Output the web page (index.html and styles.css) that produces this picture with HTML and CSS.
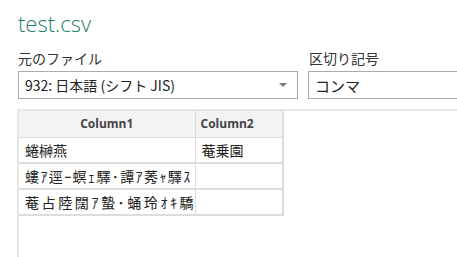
FILE: index.html
```html
<!DOCTYPE html>
<html lang="ja">

<head>
    <meta charset="UTF-8">
    <title>test.csv</title>
    <link rel="stylesheet" href="styles.css">
</head>

<body>
    <div class="import-dialog">
        <h1 class="file-title">test.csv</h1>

        <div class="options">
            <div class="field field-origin">
                <label>元のファイル</label>
                <div class="select-box">
                    <span>932: 日本語 (シフト JIS)</span>
                    <span class="arrow"></span>
                </div>
            </div>
            <div class="field field-delimiter">
                <label>区切り記号</label>
                <div class="select-box">
                    <span>コンマ</span>
                </div>
            </div>
        </div>

        <div class="preview">
            <table class="preview-table">
                <thead>
                    <tr>
                        <th class="col1">Column1</th>
                        <th class="col2">Column2</th>
                    </tr>
                </thead>
                <tbody>
                    <tr>
                        <td>蜷榊燕</td>
                        <td>菴乗園</td>
                    </tr>
                    <tr class="broken">
                        <td>螻ｱ逕ｰ螟ｪ驛･譚ｱ莠ｬ驛ｽ</td>
                        <td></td>
                    </tr>
                    <tr class="broken wide">
                        <td>菴占陸闊ｱ蟄･蛹玲ｵｷ驕</td>
                        <td></td>
                    </tr>
                </tbody>
            </table>
        </div>
    </div>
</body>

</html>
```

FILE: styles.css
```css
* {
    margin: 0;
    padding: 0;
    box-sizing: border-box;
}

body {
    background: #fff;
    font-family: 'Open Sans', 'Noto Sans CJK JP', sans-serif;
    color: #333;
    overflow: hidden;
    width: 457px;
    height: 257px;
}

.import-dialog {
    padding: 8px 0 0 17px;
}

.file-title {
    font-family: 'Open Sans', sans-serif;
    font-weight: 300;
    font-size: 22px;
    line-height: 30px;
    color: #1e7e6a;
    padding-left: 1px;
}

.options {
    display: flex;
    gap: 10px;
    margin-top: 10px;
}

.field label {
    display: block;
    font-family: 'Noto Sans CJK JP', sans-serif;
    font-size: 14px;
    line-height: 20px;
    color: #333;
    padding-left: 1px;
}

.select-box {
    margin-top: 3px;
    height: 28px;
    border: 1px solid #ababab;
    display: flex;
    align-items: center;
    justify-content: space-between;
    padding: 0 10px 0 6px;
    font-family: 'Noto Sans CJK JP', sans-serif;
    font-size: 14px;
    color: #222;
}

.field-origin .select-box {
    width: 280px;
    margin-left: 1px;
}

.field-delimiter .select-box {
    width: 170px;
    font-size: 15px;
}

.arrow {
    width: 0;
    height: 0;
    border-left: 4px solid transparent;
    border-right: 4px solid transparent;
    border-top: 4px solid #777;
}

.preview {
    margin-top: 10px;
    border-top: 2px solid #e6e6e6;
    border-left: 2px solid #e6e6e6;
    height: 150px;
}

.preview-table {
    border-collapse: collapse;
    table-layout: fixed;
    width: 264px;
}

.preview-table th {
    background: #f3f3f3;
    font-family: 'Open Sans', sans-serif;
    font-weight: 700;
    font-size: 12px;
    color: #444;
    height: 26px;
    border-right: 1px solid #dcdcdc;
    border-bottom: 1px solid #dcdcdc;
}

.preview-table th.col1 {
    width: 176px;
    text-align: center;
}

.preview-table th.col2 {
    width: 88px;
    text-align: left;
    padding-left: 5px;
    border-right: 2px solid #dcdcdc;
}

.preview-table td {
    height: 26px;
    padding: 0 0 0 6px;
    font-family: 'Noto Sans CJK JP', sans-serif;
    font-size: 14px;
    color: #222;
    border-right: 1px solid #dcdcdc;
    border-bottom: 2px solid #dcdcdc;
    white-space: nowrap;
    overflow: hidden;
}

.preview-table tr.broken td {
    letter-spacing: 1.4px;
}

.preview-table tr.wide td {
    letter-spacing: 2.6px;
}

.preview-table td:last-child {
    border-right: 2px solid #dcdcdc;
}
```
